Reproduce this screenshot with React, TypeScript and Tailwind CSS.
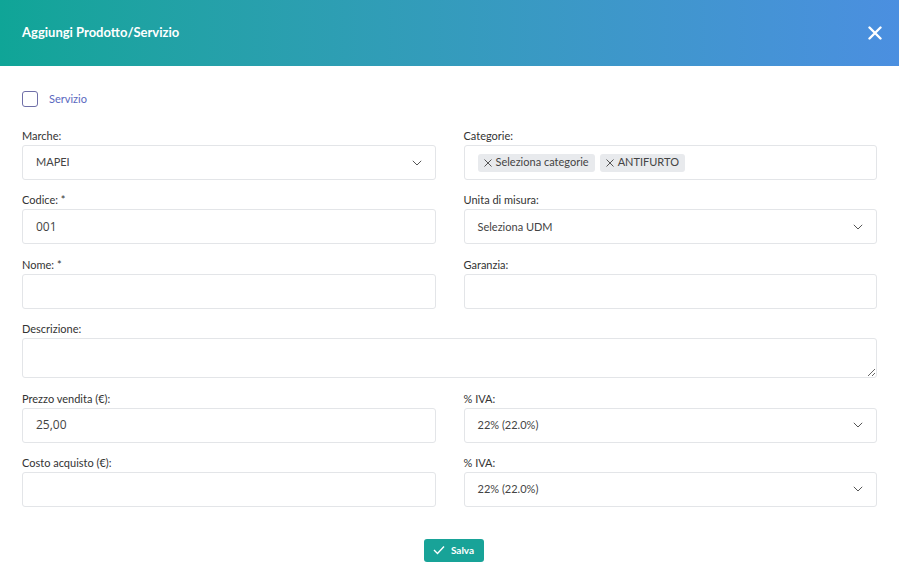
import React from "react";

const Chevron = () => (
  <svg width="10" height="6" viewBox="0 0 10 6" fill="none" className="shrink-0">
    <path d="M0.8 0.8l4.2 4.2L9.2 0.8" stroke="#555" strokeWidth="1" />
  </svg>
);

const Label = ({ children }: { children: React.ReactNode }) => (
  <div className="text-[11px] leading-[14px] text-[#333] mb-[2px]">{children}</div>
);

const Field = ({ label, children }: { label: string; children: React.ReactNode }) => (
  <div className="flex flex-col">
    <Label>{label}</Label>
    {children}
  </div>
);

const box = "h-[35px] w-full border border-[#e3e5e8] rounded-[3px] bg-white flex items-center";

const SelectBox = ({ value }: { value: string }) => (
  <div className={box + " pl-[13px] pr-[13px] justify-between"}>
    <span className="text-[11px] text-[#444]">{value}</span>
    <Chevron />
  </div>
);

const InputBox = ({ value }: { value?: string }) => (
  <div className={box + " pl-[13px]"}>
    <span className="text-[12px] text-[#444] font-['Open_Sans',sans-serif]">{value}</span>
  </div>
);

const Chip = ({ text }: { text: string }) => (
  <span className="h-[18px] flex items-center gap-[4px] px-[6px] bg-[#e8eaed] rounded-[3px] text-[11px] text-[#444]">
    <svg width="8" height="8" viewBox="0 0 8 8">
      <path d="M0.5 0.5l7 7M7.5 0.5l-7 7" stroke="#555" strokeWidth="1" />
    </svg>
    {text}
  </span>
);

export default function App() {
  return (
    <div className="w-[899px] h-[569px] bg-white font-['Lato',sans-serif] overflow-hidden">
      <div className="h-[66px] bg-gradient-to-r from-[#0fa597] to-[#4b8fe0] flex items-center justify-between pl-[22px] pr-[17px]">
        <span className="text-white text-[13px] font-bold">Aggiungi Prodotto/Servizio</span>
        <svg width="14" height="14" viewBox="0 0 14 14">
          <path d="M1.5 1.5l11 11M12.5 1.5l-11 11" stroke="white" strokeWidth="2.4" strokeLinecap="round" />
        </svg>
      </div>
      <div className="px-[22px] pt-[25px]">
        <div className="flex items-center gap-[11px] h-[16px]">
          <div className="w-[16px] h-[16px] rounded-[3px] border border-[#6f6fa8]" />
          <span className="text-[11px] text-[#5a68c0]">Servizio</span>
        </div>
        <div className="mt-[22px] grid grid-cols-2 gap-x-[28px] gap-y-[13.4px]">
          <Field label="Marche:">
            <SelectBox value="MAPEI" />
          </Field>
          <Field label="Categorie:">
            <div className={box + " pl-[13px] gap-[5px] h-[34px]"}>
              <Chip text="Seleziona categorie" />
              <Chip text="ANTIFURTO" />
            </div>
          </Field>
          <Field label="Codice: *">
            <InputBox value="001" />
          </Field>
          <Field label="Unita di misura:">
            <SelectBox value="Seleziona UDM" />
          </Field>
          <Field label="Nome: *">
            <InputBox />
          </Field>
          <Field label="Garanzia:">
            <InputBox />
          </Field>
          <div className="col-span-2 flex flex-col">
            <Label>Descrizione:</Label>
            <textarea className="h-[40px] w-full border border-[#e3e5e8] rounded-[3px] bg-white block outline-none" />
          </div>
          <Field label="Prezzo vendita (€):">
            <InputBox value="25,00" />
          </Field>
          <Field label="% IVA:">
            <SelectBox value="22% (22.0%)" />
          </Field>
          <Field label="Costo acquisto (€):">
            <InputBox />
          </Field>
          <Field label="% IVA:">
            <SelectBox value="22% (22.0%)" />
          </Field>
        </div>
        <div className="flex justify-center mt-[32px] pl-[8px]">
          <div className="h-[23px] w-[60px] bg-[#18a398] rounded-[3px] flex items-center justify-center gap-[6px]">
            <svg width="12" height="10" viewBox="0 0 12 10" fill="none">
              <path d="M1 5l3.5 3.5L11 1.5" stroke="white" strokeWidth="1.4" />
            </svg>
            <span className="text-white text-[10px] font-bold">Salva</span>
          </div>
        </div>
      </div>
    </div>
  );
}
